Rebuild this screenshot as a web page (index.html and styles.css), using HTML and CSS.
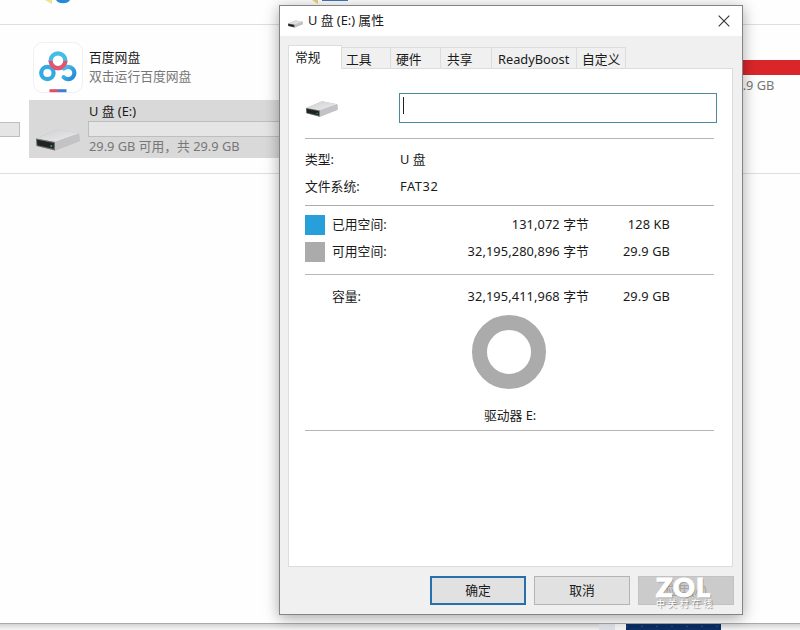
FILE: index.html
```html
<!DOCTYPE html>
<html lang="zh-CN">
<head>
    <meta charset="UTF-8">
    <meta name="viewport" content="width=device-width, initial-scale=1.0">
    <title>U 盘 (E:) 属性</title>
    <link rel="stylesheet" href="styles.css">
</head>
<body>
    <svg class="defs" width="0" height="0">
        <defs>
            <linearGradient id="driveTop" x1="0" y1="0" x2="1" y2="1">
                <stop offset="0" stop-color="#cfcfd1"/>
                <stop offset="1" stop-color="#ececee"/>
            </linearGradient>
            <linearGradient id="panBlue" x1="0" y1="0" x2="1" y2="1">
                <stop offset="0" stop-color="#4cc3ec"/>
                <stop offset="1" stop-color="#1f86d8"/>
            </linearGradient>
            <symbol id="drive" viewBox="0 0 44 22">
                <path d="M0 9.5 22 0.5 43 4.5 43.5 12 19 21.5 0.5 17z" fill="#b4b4b8"/>
                <path d="M0 9.5 22 0.5 43 4.5 19 13z" fill="url(#driveTop)"/>
                <path d="M19 13 43 4.5 43.5 12 19 21.5z" fill="#c3c3c6"/>
                <path d="M0 9.5 19 13 19 21.5 0.5 17z" fill="#6a6d6f"/>
                <path d="M1 10.8 17.8 14 17.8 19.8 1.3 16.2z" fill="#1f2423"/>
                <circle cx="15.3" cy="17" r="1" fill="#3fae55"/>
            </symbol>
        </defs>
    </svg>

    <div class="desktop">
        <!-- 资源管理器 -->
        <div class="explorer">
            <div class="section folders">
                <svg class="cut-icon first" width="26" height="4" viewBox="0 0 26 4">
                    <path d="M0 0h7v4z" fill="#f3df8e"/>
                    <path d="M11 0h14q-2 3.2-7 3.2T11 0z" fill="#2489d8"/>
                </svg>
                <svg class="cut-icon second" width="40" height="4" viewBox="0 0 40 4">
                    <path d="M0 0h6v4z" fill="#efce7c"/>
                    <path d="M10 0h26v1H10z" fill="#3b78bd"/>
                </svg>
            </div>
            <div class="section devices">
                <div class="col-left">
                    <div class="usage-bar cut"></div>
                </div>
                <div class="col-main">
                    <div class="item">
                        <svg class="pan-icon" width="50" height="52" viewBox="0 0 50 52">
                            <rect x="0.5" y="0.5" width="49" height="50" rx="9" fill="#fff" stroke="#f0f0f0"/>
                            <g fill="none" stroke-width="4.2">
                                <circle cx="14.4" cy="31" r="6.2" stroke="#36a9e3"/>
                                <path d="M30.6 35.2a6.2 6.2 0 1 0 .2-8.6" stroke="url(#panBlue)" stroke-linecap="round"/>
                                <circle cx="25" cy="18.8" r="7.4" stroke="#45bde9"/>
                                <path d="M17.6 18.8a7.4 7.4 0 0 0 14.8 0" stroke="#e5536f"/>
                            </g>
                            <path d="M16.5 47.2h8.5v3h-8.5z" fill="#dc4f6c"/>
                            <path d="M25 47.2h8.5v3H25z" fill="#3d80d0"/>
                        </svg>
                        <div class="item-text">
                            <div class="item-name">百度网盘</div>
                            <div class="item-desc">双击运行百度网盘</div>
                        </div>
                    </div>
                    <div class="item selected">
                        <svg class="drive-icon" width="44" height="22"><use href="#drive"/></svg>
                        <div class="item-text">
                            <div class="item-name">U 盘 (E:)</div>
                            <div class="usage-bar"></div>
                            <div class="item-desc">29.9 GB 可用，共 29.9 GB</div>
                        </div>
                    </div>
                </div>
                <div class="col-right">
                    <div class="usage-bar full"></div>
                    <div class="item-desc">99.9 GB</div>
                </div>
            </div>
        </div>
        <div class="taskbar">
            <div class="thumb-edge"></div>
            <div class="thumb"></div>
        </div>

        <!-- 属性对话框 -->
        <div class="dialog">
            <div class="titlebar">
                <svg width="15" height="8"><use href="#drive"/></svg>
                <span class="title">U 盘 (E:) 属性</span>
                <svg class="close" width="12" height="12" viewBox="0 0 12 12">
                    <path d="M.7.7l10.6 10.6M11.3.7L.7 11.3" stroke="#333" stroke-width="1.1"/>
                </svg>
            </div>
            <div class="tabs">
                <div class="tab active">常规</div>
                <div class="tab tools">工具</div>
                <div class="tab hardware">硬件</div>
                <div class="tab share">共享</div>
                <div class="tab boost">ReadyBoost</div>
                <div class="tab custom">自定义</div>
            </div>
            <div class="panel">
                <div class="label-row">
                    <svg width="32" height="16"><use href="#drive"/></svg>
                    <div class="name-input"><span class="caret"></span></div>
                </div>
                <div class="info">
                    <span>类型:</span><span>U 盘</span>
                    <span>文件系统:</span><span class="fs">FAT32</span>
                </div>
                <div class="space">
                    <i class="swatch used"></i><span>已用空间:</span><span class="num">131,072 字节</span><span class="num">128 KB</span>
                    <i class="swatch free"></i><span>可用空间:</span><span class="num">32,195,280,896 字节</span><span class="num">29.9 GB</span>
                </div>
                <div class="capacity">
                    <div class="space total">
                        <i></i><span>容量:</span><span class="num">32,195,411,968 字节</span><span class="num">29.9 GB</span>
                    </div>
                    <div class="ring"></div>
                    <div class="drive-name">驱动器 E:</div>
                </div>
            </div>
            <div class="buttons">
                <div class="btn primary">确定</div>
                <div class="btn">取消</div>
                <div class="btn disabled">应用(A)</div>
            </div>
            <div class="watermark">
                <div class="zol">ZOL</div>
                <div class="zol-sub">中关村在线</div>
            </div>
        </div>
    </div>
</body>
</html>
```
FILE: styles.css
```css
/* 全局样式 */
* {
    box-sizing: border-box;
}

body {
    margin: 0;
    background: #fff;
    color: #1a1a1a;
    font-family: "Noto Sans", "Noto Sans CJK SC", sans-serif;
    font-size: 12.8px;
    line-height: 18px;
    white-space: nowrap;
}

.defs {
    position: absolute;
}

svg {
    display: block;
    flex: none;
}

.desktop {
    position: relative;
    width: 800px;
    height: 630px;
    overflow: hidden;
}

/* 资源管理器 */
.explorer {
    height: 624px;
    background: #fefefe;
    border-bottom: 1px solid #a9a9a9;
}

.section {
    border-bottom: 1px solid #dedede;
}

.folders {
    display: flex;
    height: 25px;
    padding-left: 45px;
}

.cut-icon.second {
    margin-left: 241px;
}

.devices {
    display: flex;
    height: 149px;
}

.col-left {
    width: 29px;
    padding-top: 97px;
}

.col-main {
    width: 271px;
    padding-top: 17px;
}

.col-right {
    flex: 1;
    padding-top: 35px;
    padding-left: 420px;
}

.usage-bar {
    height: 15px;
    background: #e5e5e5;
    border: 1px solid #bebebe;
}

.usage-bar.cut {
    width: 20px;
    border-left: none;
}

.usage-bar.full {
    background: #da2629;
    border-color: #d2282a;
}

.col-right .item-desc {
    padding-top: 1px;
    padding-left: 8px;
}

.item {
    display: flex;
    height: 58px;
}

.pan-icon {
    margin: 0 6px 0 4px;
}

.item-name {
    line-height: 19px;
}

.item-desc {
    color: #777;
}

.item:not(.selected) .item-text {
    padding-top: 6px;
}

.selected {
    background: #d9d9d9;
}

.drive-icon {
    margin: 29px 9px 0 7px;
}

.selected .item-text {
    flex: 1;
    padding-top: 2px;
}

.selected .usage-bar {
    height: 16px;
    margin-left: -1px;
}

.taskbar {
    display: flex;
    height: 6px;
    padding-left: 599px;
    background: linear-gradient(#d4d4d4, #f6f6f6);
}

.thumb-edge {
    width: 27px;
    background: linear-gradient(90deg, #dfe2e8 60%, #f4f4f4 60%);
}

.thumb {
    width: 95px;
    background: #0d2f66;
    background-image: repeating-linear-gradient(90deg, #274b80 0 2px, #0a2859 2px 15px);
    background-size: 100% 1px;
    background-repeat: no-repeat;
    background-position: 0 2px;
}

/* 属性对话框 */
.dialog {
    position: absolute;
    left: 279px;
    top: 5px;
    width: 464px;
    height: 610px;
    background: #f0f0f0;
    border: 1px solid #848484;
    box-shadow: 0 3px 14px rgba(0, 0, 0, 0.35);
}

.titlebar {
    display: flex;
    align-items: center;
    height: 30px;
    padding: 0 12px 0 8px;
    background: #fff;
}

.titlebar svg:first-child {
    margin-top: 5px;
}

.title {
    margin-top: -2px;
    margin-left: 5px;
}

.close {
    margin-left: auto;
}

.tabs {
    display: flex;
    align-items: flex-end;
    height: 32px;
    padding-left: 8px;
}

.tab {
    height: 21px;
    padding-left: 5px;
    line-height: 22px;
    border-top: 1px solid #dcdcdc;
    border-right: 1px solid #dcdcdc;
}

.tab.active {
    position: relative;
    z-index: 1;
    width: 54px;
    height: 24px;
    margin-bottom: -1px;
    padding-left: 6px;
    line-height: 23px;
    background: #fff;
    border-left: 1px solid #dcdcdc;
}

.tab.tools {
    width: 49px;
    padding-left: 4px;
}

.tab.hardware {
    width: 50px;
}

.tab.share {
    width: 51px;
    padding-left: 6px;
}

.tab.boost {
    width: 85px;
    padding-left: 6px;
}

.tab.custom {
    width: 49px;
    padding-left: 5px;
}

.panel {
    width: 445px;
    height: 499px;
    margin-left: 8px;
    padding: 0 18px 0 16px;
    background: #fff;
    border: 1px solid #dcdcdc;
}

.label-row {
    display: flex;
    height: 70px;
    padding: 24px 0 0 1px;
    border-bottom: 1px solid #b5b5b5;
}

.label-row svg {
    margin-top: 8px;
}

.name-input {
    width: 318px;
    height: 30px;
    margin: 0 -3px 0 61px;
    padding: 3px 3px;
    border: 1px solid #4c899d;
}

.caret {
    display: block;
    width: 1px;
    height: 17px;
    background: #222;
}

.info {
    display: grid;
    grid-template-columns: 95px 1fr;
    grid-auto-rows: 27px;
    align-items: center;
    height: 67px;
    padding-top: 6px;
    border-bottom: 1px solid #adadad;
}

.fs {
    letter-spacing: 0.6px;
}

.space {
    display: grid;
    grid-template-columns: 27px 80px 177px 81px;
    grid-auto-rows: 27px;
    align-items: center;
    height: 69px;
    padding-top: 5px;
    border-bottom: 1px solid #b8b8b8;
}

.space span {
    margin-top: -2px;
}

.swatch {
    width: 20px;
    height: 20px;
}

.used {
    background: #269fda;
}

.free {
    background: #ababab;
}

.num {
    text-align: right;
    letter-spacing: 0.1px;
}

.capacity {
    height: 156px;
    border-bottom: 1px solid #b5b5b5;
}

.space.total {
    height: 40px;
    padding-top: 8px;
    border: none;
}

.ring {
    width: 74px;
    height: 74px;
    margin-left: 167px;
    border: 15px solid #ababab;
    border-radius: 50%;
}

.drive-name {
    margin-top: 17px;
    padding-left: 179px;
}

.buttons {
    display: flex;
    gap: 8px;
    padding: 9px 0 0 150px;
}

.btn {
    width: 96px;
    height: 29px;
    line-height: 27px;
    text-align: center;
    background: #e1e1e1;
    border: 1px solid #b4b4b4;
}

.btn.primary {
    line-height: 25px;
    border: 2px solid #2870ab;
}

.btn.disabled {
    color: #a4a4a4;
    background: #cbcbcb;
    border-color: #c2c2c2;
}

/* 水印 */
.watermark {
    position: absolute;
    left: 376px;
    top: 569px;
    color: #fff;
    text-shadow: 1px 1px 1px rgba(0, 0, 0, 0.4);
}

.zol {
    font-family: Lato, sans-serif;
    font-size: 27px;
    font-weight: 900;
    line-height: 23px;
    letter-spacing: 1px;
    -webkit-text-stroke: 1.2px #fff;
}

.zol-sub {
    font-size: 9px;
    letter-spacing: 2.8px;
    line-height: 12px;
}
```
